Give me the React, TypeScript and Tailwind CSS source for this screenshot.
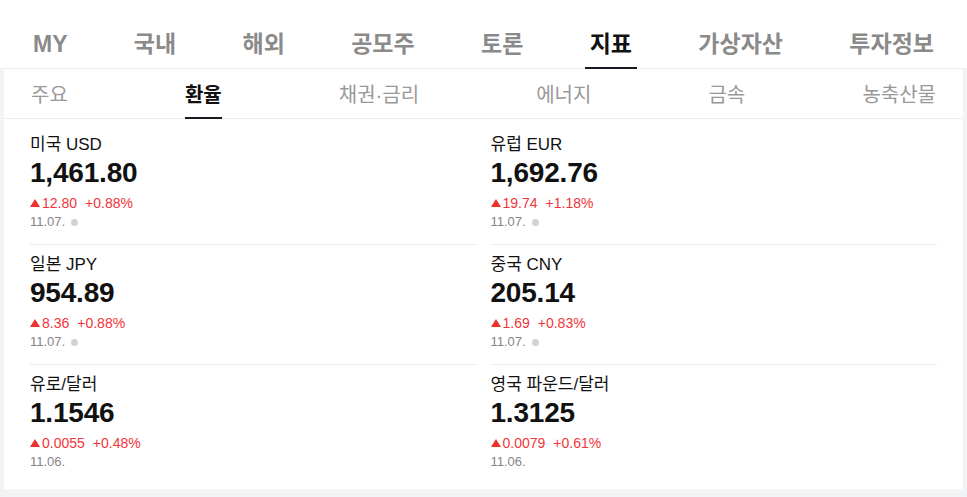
const font = "font-['Liberation_Sans','Noto_Sans_CJK_KR',sans-serif]"

const mainTabs = ['MY', '국내', '해외', '공모주', '토론', '지표', '가상자산', '투자정보']
const subTabs = ['주요', '환율', '채권·금리', '에너지', '금속', '농축산물']

type Rate = {
    name: string
    value: string
    diff: string
    pct: string
    date: string
    live: boolean
}

const rates: Rate[] = [
    { name: '미국 USD', value: '1,461.80', diff: '12.80', pct: '+0.88%', date: '11.07.', live: true },
    { name: '유럽 EUR', value: '1,692.76', diff: '19.74', pct: '+1.18%', date: '11.07.', live: true },
    { name: '일본 JPY', value: '954.89', diff: '8.36', pct: '+0.88%', date: '11.07.', live: true },
    { name: '중국 CNY', value: '205.14', diff: '1.69', pct: '+0.83%', date: '11.07.', live: true },
    { name: '유로/달러', value: '1.1546', diff: '0.0055', pct: '+0.48%', date: '11.06.', live: false },
    { name: '영국 파운드/달러', value: '1.3125', diff: '0.0079', pct: '+0.61%', date: '11.06.', live: false },
]

function RateCell({ rate, last }: { rate: Rate; last: boolean }) {
    return (
        <div className={`h-[120px] pt-[10px] ${last ? '' : 'border-b border-[#ebebeb]'}`}>
            <div className="text-[17px] leading-[20px] text-[#111]">{rate.name}</div>
            <div className="mt-[2px] text-[28px] leading-[32px] font-bold text-[#111] tracking-[-0.2px]">{rate.value}</div>
            <div className="mt-[5px] flex items-center text-[14px] leading-[18px] text-[#f2343a]">
                <span className="mr-[2px] inline-block w-0 h-0 border-l-[5px] border-r-[5px] border-b-[8px] border-l-transparent border-r-transparent border-b-[#f0302a]" />
                <span>{rate.diff}</span>
                <span className="ml-[8px]">{rate.pct}</span>
            </div>
            <div className="mt-[2px] flex items-center text-[13px] leading-[16px] text-[#858585]">
                <span>{rate.date}</span>
                {rate.live && <span className="ml-[6px] w-[7px] h-[7px] rounded-full bg-[#cfd2d8]" />}
            </div>
        </div>
    )
}

export default function App() {
    return (
        <div className={`w-[967px] h-[497px] bg-[#f2f3f5] ${font}`}>
            <nav className="h-[68px] bg-white flex justify-between px-[28px] pt-[20px]">
                {mainTabs.map(tab => (
                    <div
                        key={tab}
                        className={`relative h-[48px] px-[5px] flex items-center text-[23px] font-bold ${tab === '지표' ? 'text-[#111]' : 'text-[#8a8a8a]'}`}
                    >
                        {tab}
                        {tab === '지표' && <span className="absolute left-0 right-0 bottom-[-1px] h-[2px] bg-[#1a1a22]" />}
                    </div>
                ))}
            </nav>

            <section className="mx-[4px] bg-white border-t border-[#ebebeb]">
                <div className="h-[50px] flex justify-between px-[27px] border-b border-[#ebebeb]">
                    {subTabs.map(tab => (
                        <div
                            key={tab}
                            className={`relative h-full flex items-center pt-[2px] text-[20px] ${tab === '환율' ? 'font-bold text-[#111]' : 'text-[#999]'}`}
                        >
                            {tab}
                            {tab === '환율' && <span className="absolute left-0 right-0 bottom-[-1px] h-[2px] bg-[#1a1a22]" />}
                        </div>
                    ))}
                </div>

                <div className="grid grid-cols-2 gap-x-[14px] px-[26px] pt-[6px] pb-[4px]">
                    {rates.map((rate, i) => (
                        <RateCell key={rate.name} rate={rate} last={i >= 4} />
                    ))}
                </div>
            </section>
        </div>
    )
}
